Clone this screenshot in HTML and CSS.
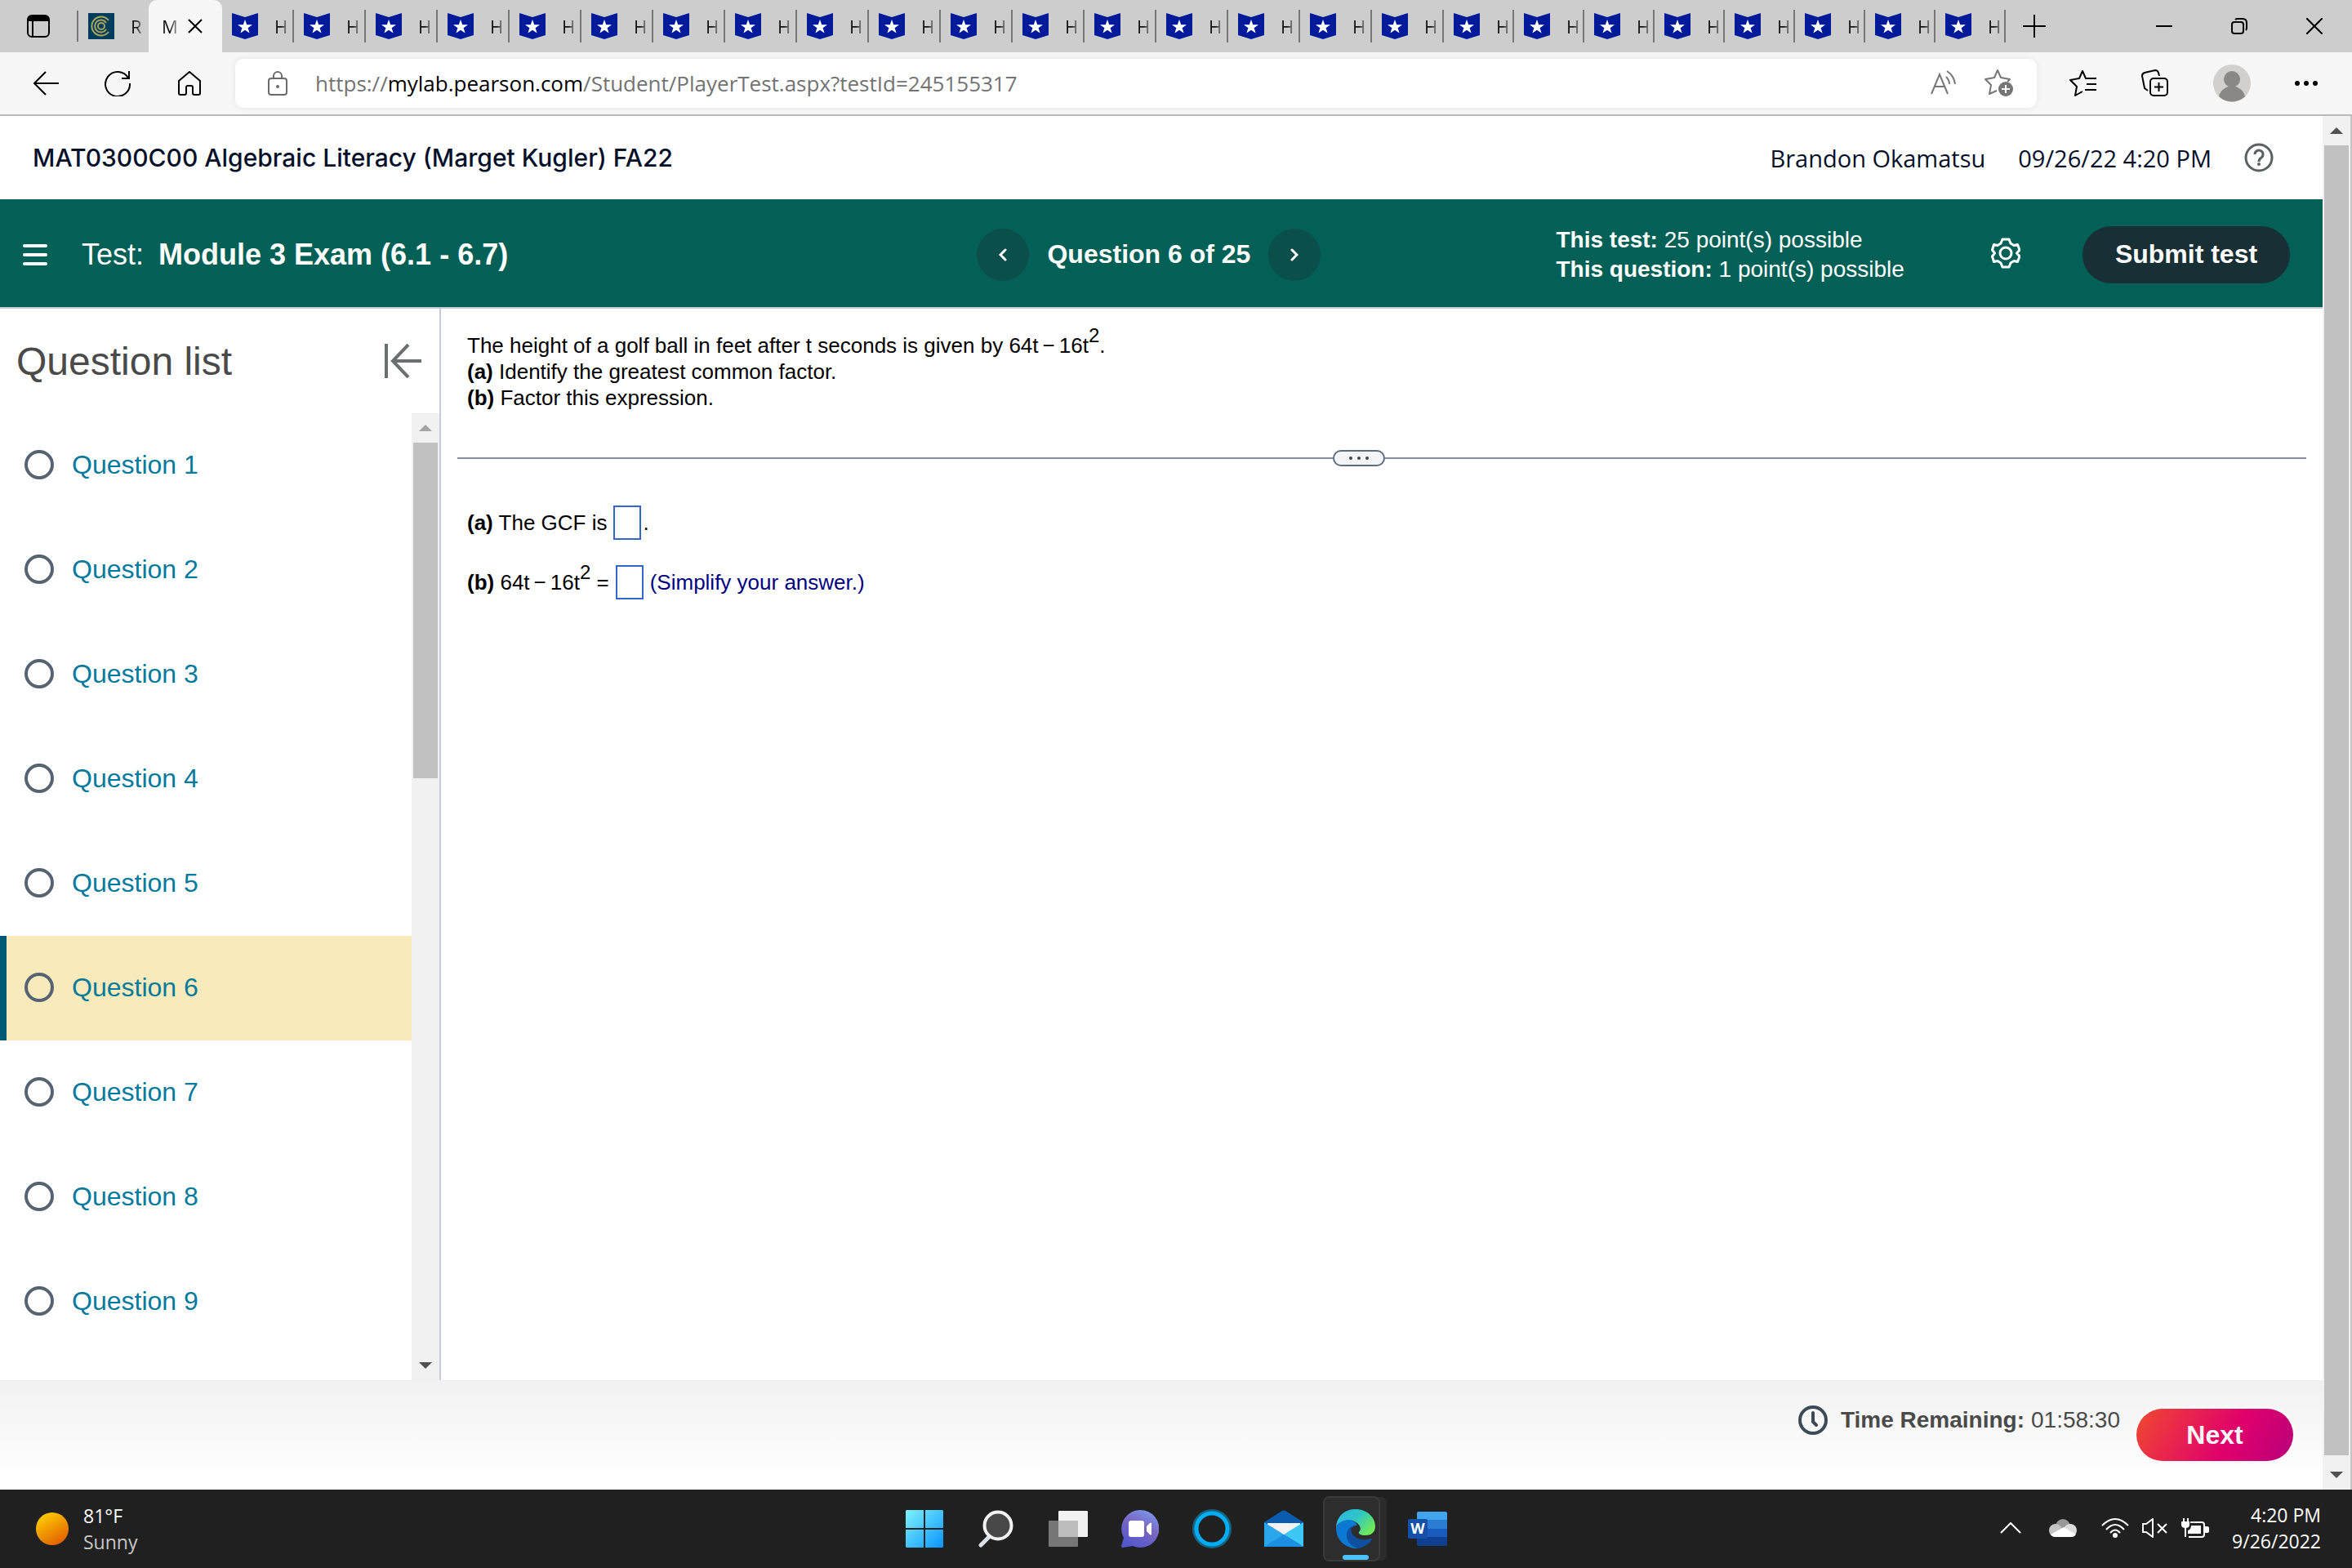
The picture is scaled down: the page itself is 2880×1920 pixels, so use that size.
FILE: index.html
```html
<!DOCTYPE html>
<html lang="en">
<head>
  <meta charset="UTF-8" />
  <meta name="viewport" content="width=device-width, initial-scale=1.0" />
  <title>Module 3 Exam (6.1 - 6.7)</title>
  <link rel="stylesheet" href="styles.css">
</head>
<body>
  <svg class="defs" width="0" height="0" aria-hidden="true">
    <symbol id="ribbon" viewBox="0 0 32 32">
      <path fill="#001a99" d="M0 0L16 5L32 0V27L16 32L0 27Z"/>
      <path fill="#fff" d="M16 8L18.2 14.2H25L19.6 18.2L21.6 24.6L16 20.8L10.4 24.6L12.4 18.2L7 14.2H13.8Z"/>
    </symbol>
    <symbol id="up" viewBox="0 0 16 8"><path fill="currentColor" d="M8 0L16 8H0Z"/></symbol>
    <symbol id="down" viewBox="0 0 16 8"><path fill="currentColor" d="M0 0H16L8 8Z"/></symbol>
  </svg>

  <!-- browser tabs -->
  <div class="tabbar">
    <button class="tab-menu" aria-label="Tab actions">
      <svg width="28" height="28" viewBox="0 0 28 28"><rect x="1" y="1" width="26" height="26" rx="5" fill="none" stroke="#000" stroke-width="2"/><path d="M1 8V6a5 5 0 0 1 5-5h16a5 5 0 0 1 5 5v2z"/><path d="M7 8v19" stroke="#000" stroke-width="2"/></svg>
    </button>
    <button class="tab first">
      <svg width="32" height="32" viewBox="0 0 32 32"><rect width="32" height="32" fill="#003d5c"/><g fill="none" stroke="#a9a45c" stroke-width="2"><path d="M25 9A11.500 11.500 0 1 0 25 23"/><path d="M22 12A7.500 7.500 0 1 0 22 20"/><circle cx="16" cy="16" r="4"/></g></svg>
      <span>R</span>
    </button>
    <button class="tab active">
      <span>M</span>
      <svg width="18" height="18" viewBox="0 0 18 18"><path d="M1 1L17 17M17 1L1 17" stroke="#000" stroke-width="2"/></svg>
    </button>
    <div class="tabs">
      <button class="tab"><svg><use href="#ribbon"/></svg><span>H</span></button>
      <button class="tab"><svg><use href="#ribbon"/></svg><span>H</span></button>
      <button class="tab"><svg><use href="#ribbon"/></svg><span>H</span></button>
      <button class="tab"><svg><use href="#ribbon"/></svg><span>H</span></button>
      <button class="tab"><svg><use href="#ribbon"/></svg><span>H</span></button>
      <button class="tab"><svg><use href="#ribbon"/></svg><span>H</span></button>
      <button class="tab"><svg><use href="#ribbon"/></svg><span>H</span></button>
      <button class="tab"><svg><use href="#ribbon"/></svg><span>H</span></button>
      <button class="tab"><svg><use href="#ribbon"/></svg><span>H</span></button>
      <button class="tab"><svg><use href="#ribbon"/></svg><span>H</span></button>
      <button class="tab"><svg><use href="#ribbon"/></svg><span>H</span></button>
      <button class="tab"><svg><use href="#ribbon"/></svg><span>H</span></button>
      <button class="tab"><svg><use href="#ribbon"/></svg><span>H</span></button>
      <button class="tab"><svg><use href="#ribbon"/></svg><span>H</span></button>
      <button class="tab"><svg><use href="#ribbon"/></svg><span>H</span></button>
      <button class="tab"><svg><use href="#ribbon"/></svg><span>H</span></button>
      <button class="tab"><svg><use href="#ribbon"/></svg><span>H</span></button>
      <button class="tab"><svg><use href="#ribbon"/></svg><span>H</span></button>
      <button class="tab"><svg><use href="#ribbon"/></svg><span>H</span></button>
      <button class="tab"><svg><use href="#ribbon"/></svg><span>H</span></button>
      <button class="tab"><svg><use href="#ribbon"/></svg><span>H</span></button>
      <button class="tab"><svg><use href="#ribbon"/></svg><span>H</span></button>
      <button class="tab"><svg><use href="#ribbon"/></svg><span>H</span></button>
      <button class="tab"><svg><use href="#ribbon"/></svg><span>H</span></button>
      <button class="tab"><svg><use href="#ribbon"/></svg><span>H</span></button>
    </div>
    <button class="new-tab" aria-label="New tab">
      <svg width="28" height="28" viewBox="0 0 28 28"><path d="M14 0V28M0 14H28" stroke="#000" stroke-width="2"/></svg>
    </button>
    <div class="window-buttons">
      <button aria-label="Minimize"><svg width="20" height="20" viewBox="0 0 20 20"><path d="M0 10H20" stroke="#000" stroke-width="2"/></svg></button>
      <button aria-label="Restore"><svg width="20" height="20" viewBox="0 0 20 20" fill="none" stroke="#000" stroke-width="2"><rect x="1" y="5" width="14" height="14" rx="3"/><path d="M5 2q1-1 3-1h6q5 0 5 5v6q0 2-1 3"/></svg></button>
      <button aria-label="Close"><svg width="20" height="20" viewBox="0 0 20 20"><path d="M0 0L20 20M20 0L0 20" stroke="#000" stroke-width="2"/></svg></button>
    </div>
  </div>

  <!-- address bar -->
  <div class="toolbar">
    <div class="nav-buttons">
      <button aria-label="Back"><svg width="32" height="32" viewBox="0 0 32 32" fill="none" stroke="#000" stroke-width="2"><path d="M16 2L2 16L16 30M2 16H32"/></svg></button>
      <button aria-label="Refresh"><svg width="32" height="32" viewBox="0 0 32 32" fill="none" stroke="#000" stroke-width="2"><path d="M30 1V10H21M29 9.500A15 15 0 1 0 31 16"/></svg></button>
      <button aria-label="Home"><svg width="32" height="32" viewBox="0 0 32 32" fill="none" stroke="#000" stroke-width="2" stroke-linejoin="round"><path d="M16 2L29 13V28q0 2-2 2H22q-2 0-2-2V21q0-2-2-2H14q-2 0-2 2V28q0 2-2 2H5q-2 0-2-2V13Z"/></svg></button>
    </div>
    <div class="address">
      <svg width="24" height="30" viewBox="0 0 24 30" fill="none" stroke="#6b6b6b" stroke-width="2"><rect x="1" y="9" width="22" height="20" rx="3"/><path d="M7 9V6a5 5 0 0 1 10 0v3"/><circle cx="12" cy="19" r="2" fill="#6b6b6b" stroke="none"/></svg>
      <span class="url">https://<b>mylab.pearson.com</b>/Student/PlayerTest.aspx?testId=245155317</span>
      <button aria-label="Read aloud"><svg width="32" height="32" viewBox="0 0 32 32" fill="none" stroke="#767676" stroke-width="2"><path d="M1 29L11 5L21 29M5 20H17"/><path d="M19 8q4 4 4 9M20 1q9 6 10 16"/></svg></button>
      <button aria-label="Add to favorites"><svg width="36" height="36" viewBox="0 0 36 36" fill="none" stroke="#767676" stroke-width="2" stroke-linejoin="round"><path d="M15 27L6 31L8 20L1 13L12 11L16 2L20 11L31 13L28 16"/><circle cx="26" cy="25" r="9" fill="#767676" stroke="none"/><path d="M26 20V30M21 25H31" stroke="#fff"/></svg></button>
    </div>
    <div class="tools">
      <button aria-label="Favorites"><svg width="34" height="32" viewBox="0 0 34 32" fill="none" stroke="#000" stroke-width="2" stroke-linejoin="round"><path d="M16 26L7 31L9 20L1 12L12 10L16 1L20 10H33M21 17H33M19 24H33"/></svg></button>
      <button aria-label="Collections"><svg width="34" height="34" viewBox="0 0 34 34" fill="none" stroke="#000" stroke-width="2"><path d="M8 26L4 23L1 8q0-3 3-4L17 1q3 0 4 3L22 8"/><rect x="11" y="11" width="21" height="21" rx="4"/><path d="M21.500 16V27M16 21.500H27"/></svg></button>
      <button aria-label="Profile"><svg width="46" height="46" viewBox="0 0 46 46"><circle cx="23" cy="23" r="23" fill="#d2d0ce"/><circle cx="23" cy="18" r="10" fill="#8a8886"/><path d="M7 39a16.500 16.500 0 0 1 32 0a23 23 0 0 1-32 0z" fill="#8a8886"/></svg></button>
      <button aria-label="More"><svg width="28" height="6" viewBox="0 0 28 6"><circle cx="3" cy="3" r="3"/><circle cx="14" cy="3" r="3"/><circle cx="25" cy="3" r="3"/></svg></button>
    </div>
  </div>

  <div class="page">
    <div class="site">
      <header class="course">
        <h1>MAT0300C00 Algebraic Literacy (Marget Kugler) FA22</h1>
        <div class="user">
          <span>Brandon Okamatsu</span>
          <span>09/26/22 4:20 PM</span>
          <button aria-label="Help"><svg width="36" height="36" viewBox="0 0 36 36" fill="none" stroke="#5a6161" stroke-width="3"><circle cx="18" cy="18" r="16"/><path d="M13 14a5 5 0 1 1 8 4q-3 2-3 5"/><circle cx="18" cy="26" r="2" fill="#5a6161" stroke="none"/></svg></button>
        </div>
      </header>

      <div class="testbar">
        <div class="test-title">
          <button aria-label="Menu"><svg width="30" height="26" viewBox="0 0 30 26"><path d="M2 2H28M2 13H28M2 24H28" stroke="#fff" stroke-width="4" stroke-linecap="round"/></svg></button>
          <span>Test:</span>
          <strong>Module 3 Exam (6.1 - 6.7)</strong>
        </div>
        <div class="pager">
          <button aria-label="Previous question"><svg width="10" height="16" viewBox="0 0 10 16"><path d="M8 2L2 8L8 14" fill="none" stroke="#fff" stroke-width="3" stroke-linecap="round"/></svg></button>
          <strong>Question 6 of 25</strong>
          <button aria-label="Next question"><svg width="10" height="16" viewBox="0 0 10 16"><path d="M2 2L8 8L2 14" fill="none" stroke="#fff" stroke-width="3" stroke-linecap="round"/></svg></button>
        </div>
        <div class="points">
          <div><strong>This test:</strong> 25 point(s) possible</div>
          <div><strong>This question:</strong> 1 point(s) possible</div>
        </div>
        <button class="settings" aria-label="Settings"><svg width="36" height="38" viewBox="0 0 36 38" fill="none" stroke="#fff" stroke-width="3" stroke-linejoin="round"><path d="M14 2H22L24 7L28 9.500L32.500 8.500L35 15L31.500 19L35 23L32.500 29.500L28 28.500L24 31L22 36H14L12 31L8 28.500L3.500 29.500L1.500 23L4.500 19L1.500 15L3.500 8.500L8 9.500L12 7Z"/><circle cx="18" cy="19" r="7"/></svg></button>
        <button class="submit">Submit test</button>
      </div>

      <div class="workspace">
        <aside class="sidebar">
          <div class="sidebar-head">
            <h2>Question list</h2>
            <button aria-label="Collapse question list"><svg width="46" height="42" viewBox="0 0 46 42" fill="none" stroke="#6a7070" stroke-width="4"><path d="M3 0V42M30 1L11 21L30 41M11 21H46"/></svg></button>
          </div>
          <div class="list-wrap">
            <nav class="questions">
              <a href="#q1"><i></i>Question 1</a>
              <a href="#q2"><i></i>Question 2</a>
              <a href="#q3"><i></i>Question 3</a>
              <a href="#q4"><i></i>Question 4</a>
              <a href="#q5"><i></i>Question 5</a>
              <a href="#q6" class="current"><i></i>Question 6</a>
              <a href="#q7"><i></i>Question 7</a>
              <a href="#q8"><i></i>Question 8</a>
              <a href="#q9"><i></i>Question 9</a>
            </nav>
            <div class="scrollbar list-scroll">
              <svg class="arrow faded"><use href="#up"/></svg>
              <div class="track"><div class="thumb"></div></div>
              <svg class="arrow"><use href="#down"/></svg>
            </div>
          </div>
        </aside>

        <main class="question">
          <div class="prompt">
            <p>The height of a golf ball in feet after t seconds is given by 64t<span class="op">−</span>16t<sup>2</sup>.</p>
            <p><b>(a)</b> Identify the greatest common factor.</p>
            <p><b>(b)</b> Factor this expression.</p>
          </div>
          <div class="divider">
            <button aria-label="Resize panes"><svg width="26" height="6" viewBox="0 0 26 6" fill="#444"><circle cx="3" cy="3" r="2"/><circle cx="13" cy="3" r="2"/><circle cx="23" cy="3" r="2"/></svg></button>
          </div>
          <div class="answers">
            <p><label for="gcf"><b>(a)</b> The GCF is</label><input id="gcf" type="text">.</p>
            <p><label for="factored"><b>(b)</b> 64t<span class="op">−</span>16t<sup>2</sup> =</label><input id="factored" type="text"><span class="hint">(Simplify your answer.)</span></p>
          </div>
        </main>
      </div>

      <footer class="footer">
        <svg width="36" height="36" viewBox="0 0 36 36" fill="none" stroke="#3c4a58" stroke-width="4" stroke-linecap="round"><circle cx="18" cy="18" r="16"/><path d="M18 9V20L22 24"/></svg>
        <strong>Time Remaining:</strong>
        <span>01:58:30</span>
        <button class="next">Next</button>
      </footer>
    </div>

    <div class="scrollbar page-scroll">
      <svg class="arrow"><use href="#up"/></svg>
      <div class="track"><div class="thumb"></div></div>
      <svg class="arrow"><use href="#down"/></svg>
    </div>
  </div>

  <!-- windows taskbar -->
  <div class="taskbar">
    <div class="weather">
      <svg width="40" height="40" viewBox="0 0 40 40"><defs><linearGradient id="sun" x1="0.200" y1="0" x2="0.800" y2="1"><stop offset="0" stop-color="#ffd000"/><stop offset="1" stop-color="#e05a00"/></linearGradient></defs><circle cx="20" cy="20" r="20" fill="url(#sun)"/></svg>
      <div><div>81°F</div><div class="dim">Sunny</div></div>
    </div>
    <div class="apps">
      <button aria-label="Start">
        <svg width="46" height="46" viewBox="0 0 46 46"><defs><linearGradient id="win" x1="0" y1="0" x2="1" y2="1"><stop offset="0" stop-color="#7df3ff"/><stop offset="1" stop-color="#0a94ff"/></linearGradient></defs><path fill="url(#win)" d="M1 0H22V22H0V1zM24 0H45L46 1V22H24zM0 24H22V46H1L0 45zM24 24H46V45L45 46H24z"/></svg>
      </button>
      <button aria-label="Search">
        <svg width="46" height="46" viewBox="0 0 46 46"><path d="M14 33L4 43" stroke="#dde1e4" stroke-width="5" stroke-linecap="round"/><circle cx="25" cy="19" r="16.500" fill="#484848" stroke="#f2f2f2" stroke-width="4"/></svg>
      </button>
      <button aria-label="Task view">
        <svg width="48" height="46" viewBox="0 0 48 46"><rect x="12" y="1" width="36" height="32" rx="1" fill="#f1f1f1"/><rect x="0" y="13" width="36" height="32" rx="1" fill="#777"/><rect x="12" y="13" width="24" height="20" fill="#bdbdbd"/></svg>
      </button>
      <button aria-label="Chat">
        <svg width="46" height="46" viewBox="0 0 46 46"><defs><linearGradient id="chat" x1="0.800" y1="0" x2="0.300" y2="1"><stop offset="0" stop-color="#7b9af0"/><stop offset="0.450" stop-color="#7a67c0"/><stop offset="1" stop-color="#5257cc"/></linearGradient></defs><path fill="url(#chat)" d="M23 0A23 23 0 1 1 14 44L2 46Q0 46 0 44L3 34A23 23 0 0 1 23 0z"/><rect x="9" y="13" width="19" height="20" rx="3" fill="#fff"/><path fill="#fff" d="M31 20L35 16q1-1 2 0V30q-1 1-2 0L31 26z"/></svg>
      </button>
      <button aria-label="Cortana">
        <svg width="48" height="48" viewBox="0 0 48 48" fill="none"><circle cx="24" cy="24" r="22" stroke="#17637f" stroke-width="4"/><circle cx="24" cy="24" r="19" stroke="#00adf4" stroke-width="5"/></svg>
      </button>
      <button aria-label="Mail">
        <svg width="48" height="46" viewBox="0 0 48 46"><path fill="#0a5cae" d="M0 15L22 1q2-1 4 0L48 15V24H0z"/><path fill="#f3f3f3" d="M4 16H44V22L24 32L4 22z"/><path fill="#2aa6ea" d="M0 15L48 45H0z"/><path fill="#3cc7f5" d="M48 15L24 30L48 45z"/><path fill="#1d8fe3" d="M24 30L0 45H48z"/></svg>
      </button>
      <button class="running" aria-label="Edge">
        <svg width="48" height="48" viewBox="0 0 48 48"><defs><linearGradient id="edge" x1="0" y1="0" x2="1" y2="0.600"><stop offset="0" stop-color="#2ab4ef"/><stop offset="0.550" stop-color="#30c6c2"/><stop offset="1" stop-color="#6ee85c"/></linearGradient></defs><path fill="#0b79d3" d="M0 22Q6 10 18 13Q26 16 25 20Q16 20 14 31Q14 43 28 48Q24 49 18 47Q0 41 0 22z"/><path fill="#0f4f9f" d="M25 19Q12 22 13 33Q15 46 28 48Q39 45 44 37Q44 35 42 36Q31 40 22 33Q17 28 19 23z"/><path fill="url(#edge)" d="M0 22C1 8 11 0 24 0C38 0 48 10 48 21C48 29 42 32 36 32C30 32 27 30 28 28C31 25 30 21 27 18C18 9 4 13 0 22z"/></svg>
      </button>
      <button aria-label="Word">
        <svg width="48" height="42" viewBox="0 0 48 42"><rect x="11" width="37" height="42" rx="2" fill="#103f91"/><path fill="#185abd" d="M11 21H48V31H11z"/><path fill="#2b7cd3" d="M11 10H48V21H11z"/><path fill="#41a5ee" d="M13 0H46q2 0 2 2V10H11V2q0-2 2-2z"/><rect y="9" width="24" height="24" rx="2" fill="#1450a8"/><text class="word-letter" x="12" y="27" text-anchor="middle">W</text></svg>
      </button>
    </div>
    <div class="tray">
      <svg width="26" height="14" viewBox="0 0 26 14"><path d="M1 13L13 1L25 13" fill="none" stroke="#fff" stroke-width="2"/></svg>
      <svg class="cloud" width="34" height="22" viewBox="0 0 34 22"><circle cx="17" cy="9" r="9" fill="#999"/><circle cx="8" cy="14" r="8" fill="#c4c4c4"/><circle cx="26" cy="14" r="8" fill="#dcdcdc"/><path d="M2 19L18 10L33 19Q31 22 27 22H8Q4 22 2 19z" fill="#fff"/></svg>
      <svg width="34" height="24" viewBox="0 0 34 24" fill="none" stroke="#fff" stroke-width="2"><path d="M1 9Q17-7 33 9M6 14Q17 2 28 14M11 18Q17 11 23 18"/><circle cx="17" cy="21" r="3" fill="#fff" stroke="none"/></svg>
      <svg width="32" height="24" viewBox="0 0 32 24" fill="none" stroke="#fff" stroke-width="2"><path d="M1 7H5L13 1V23L5 17H1ZM19 7L30 18M30 7L19 18"/></svg>
      <svg width="34" height="24" viewBox="0 0 34 24" fill="none" stroke="#fff" stroke-width="2"><path d="M11 5H25q3 0 3 3V20q0 3-3 3H9M5 10V23"/><path d="M0 4H10V8q0 4-5 4T0 8zM2 0H4V5H2zM7 0H9V5H7zM12 9H24V19H8V15Q12 14 12 9zM29 10H32q2 0 2 2V16q0 2-2 2H29z" fill="#fff" stroke="none"/></svg>
      <div class="clock"><div>4:20 PM</div><div>9/26/2022</div></div>
    </div>
  </div>
</body>
</html>
```
FILE: styles.css
```css
* {
  box-sizing: border-box;
}

html, body {
  margin: 0;
  padding: 0;
  height: 100vh;
}

body {
  display: flex;
  flex-direction: column;
  background: #fff;
  font-family: "Liberation Sans", Arial, sans-serif;
  font-size: 28px;
  color: #000;
}

button {
  display: flex;
  align-items: center;
  justify-content: center;
  padding: 0;
  border: none;
  background: none;
  font-family: inherit;
  color: inherit;
  flex: none;
}

svg {
  display: block;
  flex: none;
}

.defs {
  position: absolute;
}

h1, h2, p {
  margin: 0;
  font-weight: normal;
}

/* tabs */
.tabbar {
  display: flex;
  align-items: center;
  height: 64px;
  background: #cdcdcd;
  font-family: "Open Sans", "Noto Sans", sans-serif;
}

.tab-menu {
  width: 96px;
  height: 38px;
  border-right: 2px solid #777;
}

.tabs {
  display: flex;
}

.tab {
  justify-content: flex-start;
  gap: 20px;
  width: 88px;
  height: 40px;
  padding-left: 12px;
  border-right: 2px solid #777;
  font-size: 22px;
  color: #111;
}

.tab:nth-child(n+18) {
  width: 86px;
}

.tab svg {
  width: 32px;
  height: 32px;
}

.tab span {
  -webkit-mask-image: linear-gradient(to right, #000 50%, rgba(0, 0, 0, 0.3));
  mask-image: linear-gradient(to right, #000 50%, rgba(0, 0, 0, 0.3));
}

.tab.first {
  width: 86px;
  border: none;
}

.tab.active {
  gap: 12px;
  width: 90px;
  height: 64px;
  padding-left: 16px;
  border: none;
  border-radius: 10px 10px 0 0;
  background: #f7f7f7;
}

.tab.active svg {
  width: 18px;
  height: 18px;
}

.new-tab {
  width: 70px;
}

.window-buttons {
  display: flex;
  margin-left: auto;
}

.window-buttons button {
  width: 92px;
  height: 64px;
}

/* toolbar */
.toolbar {
  display: flex;
  align-items: center;
  height: 78px;
  background: #f7f7f7;
  border-bottom: 2px solid #b9b9b9;
}

.nav-buttons {
  display: flex;
  gap: 56px;
  padding: 0 40px;
}

.address {
  display: flex;
  flex: 1;
  align-items: center;
  gap: 34px;
  height: 60px;
  padding: 0 28px 0 40px;
  border-radius: 10px;
  background: #fff;
  box-shadow: 0 0 8px rgba(0, 0, 0, 0.08);
}

.url {
  flex: 1;
  font-family: "Open Sans", "Noto Sans", sans-serif;
  font-size: 26px;
  color: #737373;
}

.url b {
  font-weight: normal;
  color: #000;
}

.tools {
  display: flex;
  align-items: center;
  gap: 54px;
  padding: 0 42px 0 40px;
}

/* page */
.page {
  display: flex;
  flex: 1;
  min-height: 0;
}

.site {
  display: flex;
  flex: 1;
  flex-direction: column;
  min-width: 0;
}

.course {
  display: flex;
  align-items: center;
  justify-content: space-between;
  height: 102px;
  padding: 0 60px 0 40px;
  color: #05112a;
}

.course h1 {
  font-family: Inter, sans-serif;
  font-size: 30px;
  font-weight: 500;
}

.user {
  display: flex;
  align-items: center;
  gap: 40px;
  font-family: "Open Sans", "Noto Sans", sans-serif;
  font-size: 29px;
}

.testbar {
  display: grid;
  grid-template-columns: 42% 25% 1fr auto auto;
  align-items: center;
  height: 134px;
  padding-top: 3px;
  background: #036056;
  border-bottom: 2px solid #c7cbdb;
  color: #fff;
}

.test-title {
  display: flex;
  align-items: center;
  gap: 18px;
  padding-left: 28px;
  font-size: 36px;
}

.test-title button {
  margin-right: 24px;
}

.pager {
  display: flex;
  align-items: center;
  gap: 22px;
  padding-left: 2px;
  font-size: 32px;
}

.pager button {
  width: 64px;
  height: 64px;
  border-radius: 50%;
  background: #0b4f4b;
}

.points {
  line-height: 36px;
}

.settings {
  margin: 0 76px 4px 0;
}

.submit {
  width: 254px;
  height: 70px;
  margin-right: 40px;
  border-radius: 35px;
  background: #182f36;
  font-size: 32px;
  font-weight: bold;
}

.workspace {
  display: flex;
  flex: 1;
  min-height: 0;
}

.sidebar {
  display: flex;
  flex-direction: column;
  width: 540px;
  border-right: 2px solid #c9cbdb;
}

.sidebar-head {
  display: flex;
  align-items: center;
  justify-content: space-between;
  height: 128px;
  padding: 0 22px 0 20px;
}

.sidebar-head h2 {
  font-size: 48px;
  color: #4a4a4a;
}

.list-wrap {
  display: flex;
  flex: 1;
  min-height: 0;
}

.questions {
  flex: 1;
  overflow: hidden;
}

.questions a {
  display: flex;
  align-items: center;
  gap: 22px;
  height: 128px;
  padding: 0 0 2px 30px;
  font-size: 32px;
  color: #047a9c;
  text-decoration: none;
}

.questions i {
  width: 36px;
  height: 36px;
  border: 4px solid #566371;
  border-radius: 50%;
}

.questions .current {
  padding-left: 22px;
  border-left: 8px solid #005a75;
  background: #f8eaba;
}

/* scrollbars */
.scrollbar {
  display: flex;
  flex-direction: column;
  align-items: center;
  justify-content: space-between;
  width: 34px;
  background: #f1f1f1;
  color: #505050;
}

.scrollbar .arrow {
  width: 16px;
  height: 8px;
  margin: 14px 0;
}

.scrollbar .faded {
  color: #a3a3a3;
}

.track {
  flex: 1;
  width: 30px;
}

.thumb {
  background: #c1c1c1;
}

.list-scroll .thumb {
  height: 37%;
}

.page-scroll {
  width: 36px;
  border-right: 2px solid #c6c6c6;
}

.page-scroll .thumb {
  height: calc(100% - 6px);
}

/* question */
.question {
  flex: 1;
  padding: 0 20px;
  font-size: 26px;
  line-height: 32px;
}

.question sup {
  font-size: 24px;
  line-height: 0;
  vertical-align: 13px;
}

.op {
  margin: 0 5px;
}

.prompt {
  height: 174px;
  padding: 29px 12px 0;
}

.divider {
  display: flex;
  align-items: center;
  height: 18px;
}

.divider::before,
.divider::after {
  content: "";
  flex: 1;
  height: 2px;
  background: #878fa5;
}

.divider::before {
  flex-grow: 0;
  flex-basis: calc(47% + 8px);
}

.divider button {
  width: 64px;
  height: 20px;
  border: 2px solid #5f6d7d;
  border-radius: 10px;
  background: #f4f5f8;
}

.answers {
  padding: 47px 12px;
}

.answers p {
  display: flex;
  align-items: center;
  height: 46px;
  margin-bottom: 27px;
}

.answers input {
  width: 34px;
  height: 42px;
  margin: 0 2px 0 8px;
  padding: 0 4px;
  border: 2px solid #3366cc;
  background: #fff;
  font: inherit;
}

.hint {
  margin-left: 6px;
  color: #00007f;
}

.footer {
  display: flex;
  align-items: center;
  height: 134px;
  padding-right: 36px;
  justify-content: flex-end;
  background: linear-gradient(#f1f1f1, #fff 90%);
  color: #4a4a4a;
}

.footer > svg,
.footer > strong,
.footer > span {
  margin-bottom: 36px;
}

.footer strong {
  margin-left: 16px;
  margin-right: 8px;
}

.next {
  width: 192px;
  height: 64px;
  margin-left: 20px;
  border-radius: 32px;
  background: linear-gradient(120deg, #f0492f, #e0006c 60%, #b8007a);
  box-shadow: 0 0 0 3px #fafafa;
  font-size: 32px;
  font-weight: bold;
  color: #f8f8fa;
}

/* taskbar */
.taskbar {
  display: grid;
  grid-template-columns: 1fr auto 1fr;
  align-items: center;
  height: 96px;
  background: #202020;
  color: #fff;
  font-family: "Open Sans", "Noto Sans", sans-serif;
  font-size: 23px;
  line-height: 32px;
}

.weather {
  display: flex;
  align-items: center;
  gap: 18px;
  padding-left: 44px;
}

.dim {
  color: #c8c8c8;
}

.apps {
  display: flex;
}

.apps button {
  width: 88px;
  height: 96px;
}

.apps .running {
  position: relative;
  width: 70px;
  height: 80px;
  margin: 8px 14px 8px 4px;
  padding-left: 10px;
  border: 2px solid #3a3a3a;
  border-radius: 8px;
  background: #2d2d2d;
  box-shadow: 9px 0 0 -1px #2b2b2b;
}

/* open window indicator */
.running::after {
  content: "";
  position: absolute;
  bottom: 0;
  left: 22px;
  width: 32px;
  height: 6px;
  border-radius: 3px;
  background: #4cc2ff;
}

.word-letter {
  font-family: "Open Sans", sans-serif;
  font-size: 18px;
  font-weight: bold;
  fill: #fff;
}

.tray {
  display: flex;
  align-items: center;
  justify-content: flex-end;
  gap: 16px;
  padding: 0 38px 2px 0;
}

.tray .cloud {
  margin: 0 14px 0 18px;
}

.clock {
  margin-left: 12px;
  text-align: right;
}
```
